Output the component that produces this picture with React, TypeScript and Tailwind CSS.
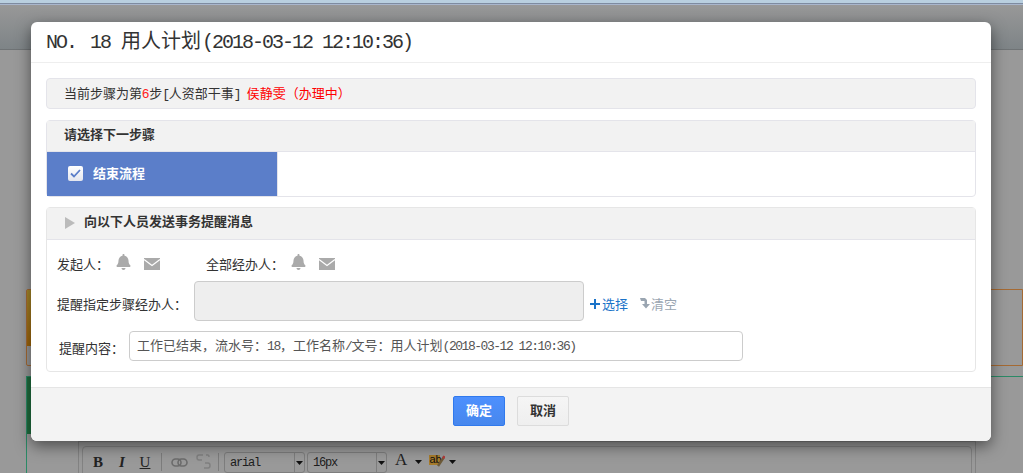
import React from "react";
import { FaBell } from "react-icons/fa";

const L = ({ children, tracking = "tracking-[-0.1em]" }: { children: React.ReactNode; tracking?: string }) => (
  <span className={`font-['Liberation_Mono'] whitespace-pre ${tracking}`}>{children}</span>
);

const Mail = () => (
  <svg width="16" height="12" viewBox="0 0 16 12" className="block">
    <rect width="16" height="12" fill="#aaaaaa" />
    <path d="M0 1.5 L8 7.5 L16 1.5" fill="none" stroke="#ffffff" strokeWidth="1.2" />
  </svg>
);

const Bell = () => <FaBell className="block w-[15px] h-[16px] text-[#aaaaaa]" />;

const Caret = () => (
  <svg width="7" height="4" viewBox="0 0 7 4" className="block">
    <path d="M0 0H7L3.5 4Z" fill="#111111" />
  </svg>
);

const Sep = () => <div className="w-px h-[18px] bg-[#7c7c7c]" />;

const Select = ({ label, w }: { label: string; w: string }) => (
  <div className={`${w} h-[21px] border border-[#7d7d7d] rounded-[3px] flex items-center`}>
    <span className="flex-1 pl-[5px] text-[12px] text-[#1c1c1c] font-['Liberation_Mono'] tracking-[-1.2px]">{label}</span>
    <div className="w-[10px] h-full border-l border-[#7d7d7d] flex items-center justify-center">
      <Caret />
    </div>
  </div>
);

export default function App() {
  return (
    <div className="relative w-[1023px] h-[473px] overflow-hidden bg-[#999999] flex flex-col font-['Noto_Sans_CJK_SC',sans-serif] text-[13px] text-[#333333]">
      {/* page behind the dialog */}
      <div className="h-[3px] shrink-0 bg-[#b9cfdf]" />
      <div className="h-px shrink-0 bg-[#7e8ba0]" />
      <div className="h-px shrink-0 bg-[#a9b6cc]" />
      <div className="h-[45px] shrink-0 bg-gradient-to-b from-[#989898] to-[#7e8487] border-b border-[#6f7375]" />
      <div className="flex-1 min-h-0 overflow-hidden flex flex-col pl-[26px] pt-[239px]">
        <div className="h-[77px] shrink-0 border border-[#a56a33] rounded-l-[2px] flex">
          <div className="w-[4px] h-[56px] bg-gradient-to-b from-[#a88a2a] to-[#a06508]" />
        </div>
        <div className="mt-[10px] h-[97px] shrink-0 border-t border-l border-[#2b8a66] flex items-start">
          <div className="w-[4px] h-[57px] bg-[#1f6e3e]" />
          <div className="ml-[47px] mt-[64px] w-[898px] h-[60px] shrink-0 border border-[#828282] px-[3px] pt-[4px]">
            <div className="h-[50px] border border-[#828282] rounded-[4px] flex items-start pl-[8px] pt-[4px]">
              <span className="w-[14px] text-center font-['Liberation_Serif'] font-bold text-[15px] leading-[22px] text-[#222222]">B</span>
              <span className="ml-[11px] w-[12px] text-center font-['Liberation_Serif'] italic font-bold text-[15px] leading-[22px] text-[#222222]">I</span>
              <span className="ml-[11px] w-[12px] text-center font-['Liberation_Serif'] underline text-[15px] leading-[22px] text-[#222222]">U</span>
              <div className="ml-[10px] mt-[2px]"><Sep /></div>
              <svg width="17" height="9" viewBox="0 0 17 9" className="ml-[9px] mt-[7px]" fill="none" stroke="#6c6c6c" strokeWidth="1.6">
                <rect x="1" y="1" width="9" height="7" rx="3.5" />
                <rect x="7" y="1" width="9" height="7" rx="3.5" />
              </svg>
              <svg width="15" height="15" viewBox="0 0 15 15" className="ml-[8px] mt-[3px]" fill="none" stroke="#808080" strokeWidth="1.5">
                <path d="M7 1H3Q1 1 1 3.5T3 6H6" />
                <path d="M8 14H12Q14 14 14 11.5T12 9H9" />
                <path d="M10 1H12Q13 1 13 3" />
              </svg>
              <div className="ml-[7px] mt-[2px]"><Sep /></div>
              <div className="ml-[5px] mt-[1px] flex gap-[2px]">
                <Select label="arial" w="w-[81px]" />
                <Select label="16px" w="w-[80px]" />
              </div>
              <span className="ml-[8px] mt-[-3px] font-['Liberation_Serif'] text-[17px] leading-[24px] text-[#222222]">A</span>
              <div className="ml-[8px] mt-[9px]"><Caret /></div>
              <svg width="16" height="14" viewBox="0 0 16 14" className="ml-[7px] mt-[2px]">
                <rect x="0" y="2" width="11" height="10" fill="#a67c2c" />
                <text x="0.5" y="10" fontSize="11" fontFamily="Liberation Sans" fill="#111111">ab</text>
                <path d="M9 13L15 4" stroke="#6d5a38" strokeWidth="2.4" />
                <path d="M14 5.5L15.5 3" stroke="#b03a3a" strokeWidth="2.4" />
              </svg>
              <div className="ml-[4px] mt-[9px]"><Caret /></div>
            </div>
          </div>
        </div>
      </div>

      {/* dialog */}
      <div className="absolute left-[31px] top-[22px] w-[960px] h-[419px] bg-white rounded-[6px] shadow-[0_5px_15px_rgba(0,0,0,0.5)] flex flex-col overflow-hidden">
        <div className="h-[41px] shrink-0 border-b border-[#eeeeee] pl-[15px] pb-[2px] flex items-center">
          <h4 className="text-[20px] leading-[22px] text-[#333333] font-normal whitespace-pre">
            <L>NO.</L>
            <span className="ml-[14px]"><L>18</L></span>
            <span className="ml-[11px]">用人计划</span>
            <span className="ml-[1px]"><L>(2018-03-12 12:10:36)</L></span>
          </h4>
        </div>

        <div className="flex-1 px-[15px] pt-[15px] flex flex-col gap-[11px]">
          <div className="h-[31px] bg-[#f2f2f2] border border-[#e4e4ea] rounded-[4px] pl-[17px] flex items-center whitespace-pre">
            <span>
              当前步骤为第<span className="text-[#ff2020] font-['Liberation_Sans']">6</span>步<L>[</L>人资部干事<L>] </L>
              <span className="text-[#ff0000]">侯静雯（办理中）</span>
            </span>
          </div>

          <div className="h-[77px] border border-[#e4e4ea] rounded-[4px] flex flex-col">
            <div className="h-[31px] bg-[#f2f2f2] border-b border-[#e4e4ea] pl-[17px] pb-[4px] flex items-center font-bold">请选择下一步骤</div>
            <div className="flex-1 flex">
              <div className="w-[231px] bg-[#5b7ec9] border-r border-[#e4e4ea] flex items-center pl-[21px] pb-[2px] gap-[10px] text-white font-bold">
                <div className="w-[15px] h-[15px] bg-gradient-to-b from-white to-[#e4e6ee] rounded-[2px] flex items-center justify-center">
                  <svg width="11" height="9" viewBox="0 0 11 9" fill="none">
                    <path d="M1 4.5L4 7.5L10 1" stroke="#5b7ec9" strokeWidth="1.8" />
                  </svg>
                </div>
                结束流程
              </div>
            </div>
          </div>

          <div className="h-[165px] -mt-px border border-[#e6e6e6] rounded-[4px] flex flex-col">
            <div className="h-[32px] shrink-0 bg-[#f2f2f2] border-b border-[#e4e4ea] pl-[18px] pb-[2px] flex items-center gap-[9px] font-bold">
              <svg width="10" height="12" viewBox="0 0 10 12" className="block">
                <path d="M0 0L10 6L0 12Z" fill="#bbbbbb" />
              </svg>
              <span className="pb-[4px]">向以下人员发送事务提醒消息</span>
            </div>
            <div className="flex-1 pl-[10px] flex flex-col">
              <div className="h-[41px] flex items-start pt-[14px]">
                <span className="w-[59px] leading-[16px] mt-[2px]">发起人：</span>
                <div className="w-[28px]"><Bell /></div>
                <div className="mt-[4px]"><Mail /></div>
                <span className="ml-[46px] w-[85px] leading-[16px] mt-[2px]">全部经办人：</span>
                <div className="w-[28px]"><Bell /></div>
                <div className="mt-[4px]"><Mail /></div>
              </div>
              <div className="flex items-center h-[40px]">
                <span className="w-[137px] pt-[6px]">提醒指定步骤经办人：</span>
                <div className="w-[390px] h-[40px] bg-[#eeeeee] border border-[#cccccc] rounded-[4px]" />
                <svg width="10" height="10" viewBox="0 0 10 10" className="ml-[6px] mt-[6px]">
                  <path d="M4 0H6V4H10V6H6V10H4V6H0V4H4Z" fill="#1a73c8" />
                </svg>
                <span className="ml-[2px] pt-[6px] text-[#1a73c8]">选择</span>
                <svg width="10" height="12" viewBox="0 0 10 12" className="ml-[12px] mt-[4px]">
                  <path d="M0 1H5L7 3V7H10L6 11.5L2 7H4.5V4H1Z" fill="#9aa5b1" />
                </svg>
                <span className="ml-[1px] pt-[6px] text-[#9aa5b1]">清空</span>
              </div>
              <div className="flex items-center mt-[10px] pl-[2px]">
                <span className="w-[70px] mt-[4px]">提醒内容：</span>
                <div className="w-[614px] h-[30px] border border-[#cccccc] rounded-[4px] pl-[7px] flex items-center whitespace-pre text-[#555555]">
                  <span>
                    工作已结束，流水号：<L>18</L>，工作名称<L>/</L>文号：用人计划<L tracking="tracking-[-0.113em]">(2018-03-12 12:10:36)</L>
                  </span>
                </div>
              </div>
            </div>
          </div>
        </div>

        <div className="h-[54px] shrink-0 bg-[#f3f3f3] border-t border-[#e5e5e5] flex justify-center items-start pt-[8px] gap-[12px]">
          <button className="w-[52px] h-[30px] pb-[2px] rounded-[2px] border border-[#3079ed] bg-gradient-to-b from-[#4d90fe] to-[#4787ed] text-white font-bold">确定</button>
          <button className="w-[52px] h-[30px] pb-[2px] rounded-[2px] border border-[#dcdcdc] bg-gradient-to-b from-[#f5f5f5] to-[#efefef] text-[#333333] font-bold">取消</button>
        </div>
      </div>
    </div>
  );
}
